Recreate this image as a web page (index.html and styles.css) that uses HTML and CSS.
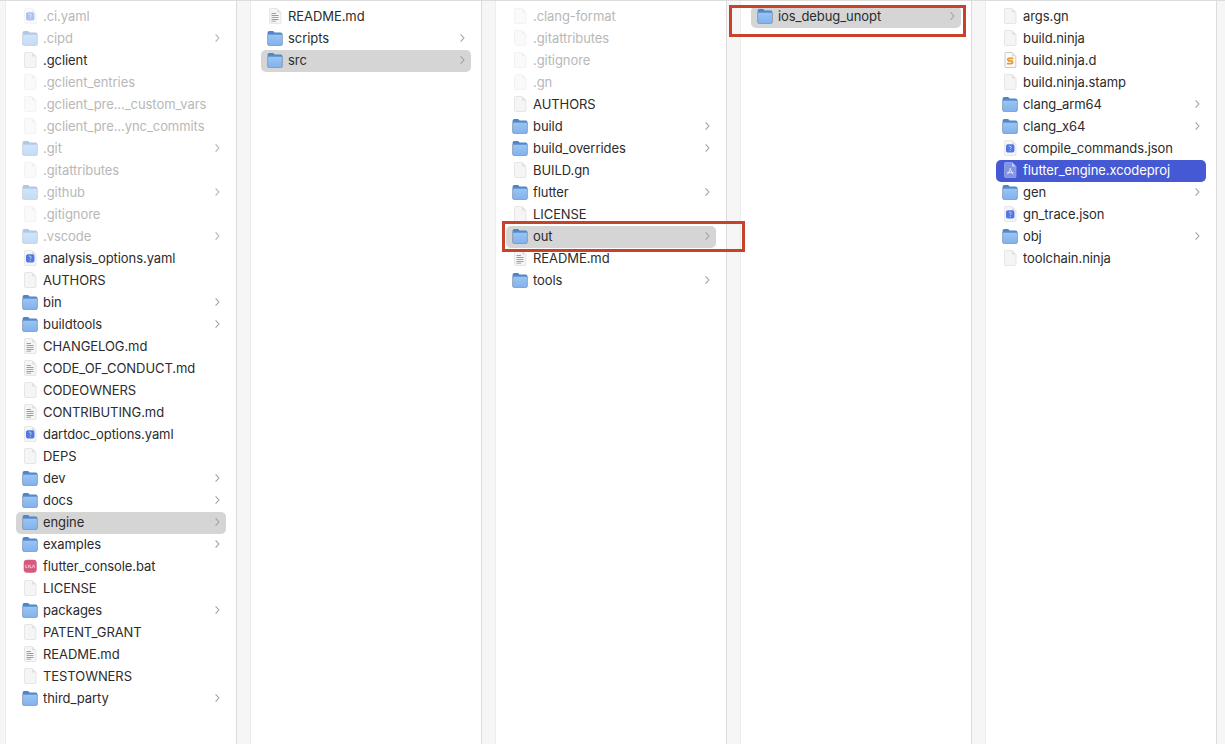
FILE: index.html
```html
<!DOCTYPE html>
<html lang="en">
<head>
<meta charset="utf-8">
<title>Finder</title>
<link rel="stylesheet" href="styles.css">
</head>
<body>
<svg class="defs" width="0" height="0" aria-hidden="true">
  <defs>
    <linearGradient id="fb" x1="0" y1="0" x2="0" y2="1"><stop offset="0" stop-color="#9cc6f4"/><stop offset="1" stop-color="#80b2ec"/></linearGradient>
    <symbol id="chev" viewBox="0 0 6 10">
      <path d="M1.6 1.4L4.9 5L1.6 8.6" fill="none" stroke="#a2a2a2" stroke-width="1.1"/>
    </symbol>
    <symbol id="folder" viewBox="0 0 16 16">
      <path d="M0.6 3C0.6 1.8 1.3 1.1 2.5 1.1H5.6C6.3 1.1 6.7 1.4 7.1 1.9L7.6 2.6H13.6C14.8 2.6 15.4 3.3 15.4 4.4V6H0.6Z" fill="#4d84c6"/>
      <rect x="0.6" y="3.9" width="14.8" height="11.6" rx="1.6" fill="url(#fb)" stroke="#7d8ea3" stroke-width="0.7"/>
      <path d="M1 4.4H15" stroke="#5f95d4" stroke-width="0.9"/>
    </symbol>
    <symbol id="doc" viewBox="0 0 16 16">
      <path d="M2.5 1.5C2.5 0.9 2.9 0.5 3.5 0.5H10L14 4.5V14.5C14 15.1 13.6 15.5 13 15.5H3.5C2.9 15.5 2.5 15.1 2.5 14.5Z" fill="#f5f5f5" stroke="#dcdcdc" stroke-width="0.7"/>
      <path d="M10 0.5V3.5C10 4.1 10.4 4.5 11 4.5H14Z" fill="#e0e0e0"/>
    </symbol>
    <symbol id="text" viewBox="0 0 16 16">
      <use href="#doc"/>
      <path d="M4.5 5.5H9" stroke="#a09ab8" stroke-width="1"/>
      <path d="M4.5 7.5H11.5" stroke="#8f9bb5" stroke-width="1"/>
      <path d="M4.5 9.5H11.5" stroke="#b79aa6" stroke-width="1"/>
      <path d="M4.5 11.5H11.5" stroke="#93a0b0" stroke-width="1"/>
      <path d="M4.5 13.2H9" stroke="#a8a8ac" stroke-width="1"/>
    </symbol>
    <symbol id="yaml" viewBox="0 0 16 16">
      <path d="M2.5 1.5C2.5 0.9 2.9 0.5 3.5 0.5H10L14 4.5V14.5C14 15.1 13.6 15.5 13 15.5H3.5C2.9 15.5 2.5 15.1 2.5 14.5Z" fill="#f5f5f5" stroke="#dedede" stroke-width="0.7"/>
      <path d="M10 0.5V3.5C10 4.1 10.4 4.5 11 4.5H14Z" fill="#e0e0e0"/>
      <rect x="4" y="4.2" width="8.4" height="8.4" rx="1.8" fill="#5078e4"/>
      <path d="M6.8 6.6C7 5.9 9.4 5.9 9.4 7.3C9.4 8.2 8.2 8.1 8.2 9.2M8.2 10.1V10.9" stroke="#cddafc" stroke-width="0.9" fill="none"/>
    </symbol>
    <symbol id="bat" viewBox="0 0 16 16">
      <rect x="1.7" y="1.7" width="13" height="13" rx="3.4" fill="#d65a80"/>
      <path d="M3.8 6.8V9.7H5.4M6.6 6.8V9.7M8 6.8V9.7H9.6M10.4 9.7L11.5 6.8L12.6 9.7" stroke="#fae2e9" stroke-width="0.8" fill="none"/>
    </symbol>
    <symbol id="src" viewBox="0 0 16 16">
      <path d="M3 1.2C3 0.8 3.3 0.5 3.7 0.5H10L13.8 4.3V15C13.8 15.3 13.5 15.5 13.2 15.5H3.7C3.3 15.5 3 15.2 3 14.8Z" fill="#fbfbfb" stroke="#a8a8a8" stroke-width="0.6"/>
      <path d="M10 0.5V4.3H13.8Z" fill="#dcdcdc"/>
      <path d="M11.4 6.4H7C5.4 6.4 5.4 8.8 7 8.8H9.4C11 8.8 11 11.6 9.4 11.6H5" stroke="#e59a2e" stroke-width="1.8" fill="none"/>
    </symbol>
    <symbol id="xcode" viewBox="0 0 16 16">
      <path d="M2.5 1.5C2.5 0.9 2.9 0.5 3.5 0.5H10L14 4.5V14.5C14 15.1 13.6 15.5 13 15.5H3.5C2.9 15.5 2.5 15.1 2.5 14.5Z" fill="#8095e6" stroke="#a9b6ee" stroke-width="0.6"/>
      <path d="M10 0.5V4.5H14Z" fill="#c2cdf5"/>
      <path d="M5.6 12.4L8.8 6.4M11 12.4L7.8 6.4M5 10.6H11.6" stroke="#dfe6fc" stroke-width="0.9" fill="none"/>
    </symbol>
  </defs>
</svg>

<main class="browser">
  <section class="column">
    <div class="row dim"><svg class="icon"><use href="#yaml"/></svg><span class="name">.ci.yaml</span></div>
    <div class="row dim"><svg class="icon"><use href="#folder"/></svg><span class="name">.cipd</span><svg class="chev"><use href="#chev"/></svg></div>
    <div class="row"><svg class="icon"><use href="#doc"/></svg><span class="name">.gclient</span></div>
    <div class="row dim"><svg class="icon"><use href="#doc"/></svg><span class="name">.gclient_entries</span></div>
    <div class="row dim"><svg class="icon"><use href="#doc"/></svg><span class="name">.gclient_pre..._custom_vars</span></div>
    <div class="row dim"><svg class="icon"><use href="#doc"/></svg><span class="name">.gclient_pre...ync_commits</span></div>
    <div class="row dim"><svg class="icon"><use href="#folder"/></svg><span class="name">.git</span><svg class="chev"><use href="#chev"/></svg></div>
    <div class="row dim"><svg class="icon"><use href="#doc"/></svg><span class="name">.gitattributes</span></div>
    <div class="row dim"><svg class="icon"><use href="#folder"/></svg><span class="name">.github</span><svg class="chev"><use href="#chev"/></svg></div>
    <div class="row dim"><svg class="icon"><use href="#doc"/></svg><span class="name">.gitignore</span></div>
    <div class="row dim"><svg class="icon"><use href="#folder"/></svg><span class="name">.vscode</span><svg class="chev"><use href="#chev"/></svg></div>
    <div class="row"><svg class="icon"><use href="#yaml"/></svg><span class="name">analysis_options.yaml</span></div>
    <div class="row"><svg class="icon"><use href="#doc"/></svg><span class="name">AUTHORS</span></div>
    <div class="row"><svg class="icon"><use href="#folder"/></svg><span class="name">bin</span><svg class="chev"><use href="#chev"/></svg></div>
    <div class="row"><svg class="icon"><use href="#folder"/></svg><span class="name">buildtools</span><svg class="chev"><use href="#chev"/></svg></div>
    <div class="row"><svg class="icon"><use href="#text"/></svg><span class="name">CHANGELOG.md</span></div>
    <div class="row"><svg class="icon"><use href="#text"/></svg><span class="name">CODE_OF_CONDUCT.md</span></div>
    <div class="row"><svg class="icon"><use href="#doc"/></svg><span class="name">CODEOWNERS</span></div>
    <div class="row"><svg class="icon"><use href="#text"/></svg><span class="name">CONTRIBUTING.md</span></div>
    <div class="row"><svg class="icon"><use href="#yaml"/></svg><span class="name">dartdoc_options.yaml</span></div>
    <div class="row"><svg class="icon"><use href="#doc"/></svg><span class="name">DEPS</span></div>
    <div class="row"><svg class="icon"><use href="#folder"/></svg><span class="name">dev</span><svg class="chev"><use href="#chev"/></svg></div>
    <div class="row"><svg class="icon"><use href="#folder"/></svg><span class="name">docs</span><svg class="chev"><use href="#chev"/></svg></div>
    <div class="row open"><svg class="icon"><use href="#folder"/></svg><span class="name">engine</span><svg class="chev"><use href="#chev"/></svg></div>
    <div class="row"><svg class="icon"><use href="#folder"/></svg><span class="name">examples</span><svg class="chev"><use href="#chev"/></svg></div>
    <div class="row"><svg class="icon"><use href="#bat"/></svg><span class="name">flutter_console.bat</span></div>
    <div class="row"><svg class="icon"><use href="#doc"/></svg><span class="name">LICENSE</span></div>
    <div class="row"><svg class="icon"><use href="#folder"/></svg><span class="name">packages</span><svg class="chev"><use href="#chev"/></svg></div>
    <div class="row"><svg class="icon"><use href="#doc"/></svg><span class="name">PATENT_GRANT</span></div>
    <div class="row"><svg class="icon"><use href="#text"/></svg><span class="name">README.md</span></div>
    <div class="row"><svg class="icon"><use href="#doc"/></svg><span class="name">TESTOWNERS</span></div>
    <div class="row"><svg class="icon"><use href="#folder"/></svg><span class="name">third_party</span><svg class="chev"><use href="#chev"/></svg></div>
  </section>

  <section class="column">
    <div class="row"><svg class="icon"><use href="#text"/></svg><span class="name">README.md</span></div>
    <div class="row"><svg class="icon"><use href="#folder"/></svg><span class="name">scripts</span><svg class="chev"><use href="#chev"/></svg></div>
    <div class="row open"><svg class="icon"><use href="#folder"/></svg><span class="name">src</span><svg class="chev"><use href="#chev"/></svg></div>
  </section>

  <section class="column">
    <div class="row dim"><svg class="icon"><use href="#doc"/></svg><span class="name">.clang-format</span></div>
    <div class="row dim"><svg class="icon"><use href="#doc"/></svg><span class="name">.gitattributes</span></div>
    <div class="row dim"><svg class="icon"><use href="#doc"/></svg><span class="name">.gitignore</span></div>
    <div class="row dim"><svg class="icon"><use href="#doc"/></svg><span class="name">.gn</span></div>
    <div class="row"><svg class="icon"><use href="#doc"/></svg><span class="name">AUTHORS</span></div>
    <div class="row"><svg class="icon"><use href="#folder"/></svg><span class="name">build</span><svg class="chev"><use href="#chev"/></svg></div>
    <div class="row"><svg class="icon"><use href="#folder"/></svg><span class="name">build_overrides</span><svg class="chev"><use href="#chev"/></svg></div>
    <div class="row"><svg class="icon"><use href="#doc"/></svg><span class="name">BUILD.gn</span></div>
    <div class="row"><svg class="icon"><use href="#folder"/></svg><span class="name">flutter</span><svg class="chev"><use href="#chev"/></svg></div>
    <div class="row"><svg class="icon"><use href="#doc"/></svg><span class="name">LICENSE</span></div>
    <div class="row open"><svg class="icon"><use href="#folder"/></svg><span class="name">out</span><svg class="chev"><use href="#chev"/></svg></div>
    <div class="row"><svg class="icon"><use href="#text"/></svg><span class="name">README.md</span></div>
    <div class="row"><svg class="icon"><use href="#folder"/></svg><span class="name">tools</span><svg class="chev"><use href="#chev"/></svg></div>
  </section>

  <section class="column">
    <div class="row open"><svg class="icon"><use href="#folder"/></svg><span class="name">ios_debug_unopt</span><svg class="chev"><use href="#chev"/></svg></div>
  </section>

  <section class="column">
    <div class="row"><svg class="icon"><use href="#doc"/></svg><span class="name">args.gn</span></div>
    <div class="row"><svg class="icon"><use href="#doc"/></svg><span class="name">build.ninja</span></div>
    <div class="row"><svg class="icon"><use href="#src"/></svg><span class="name">build.ninja.d</span></div>
    <div class="row"><svg class="icon"><use href="#doc"/></svg><span class="name">build.ninja.stamp</span></div>
    <div class="row"><svg class="icon"><use href="#folder"/></svg><span class="name">clang_arm64</span><svg class="chev"><use href="#chev"/></svg></div>
    <div class="row"><svg class="icon"><use href="#folder"/></svg><span class="name">clang_x64</span><svg class="chev"><use href="#chev"/></svg></div>
    <div class="row"><svg class="icon"><use href="#yaml"/></svg><span class="name">compile_commands.json</span></div>
    <div class="row selected"><svg class="icon"><use href="#xcode"/></svg><span class="name">flutter_engine.xcodeproj</span></div>
    <div class="row"><svg class="icon"><use href="#folder"/></svg><span class="name">gen</span><svg class="chev"><use href="#chev"/></svg></div>
    <div class="row"><svg class="icon"><use href="#yaml"/></svg><span class="name">gn_trace.json</span></div>
    <div class="row"><svg class="icon"><use href="#folder"/></svg><span class="name">obj</span><svg class="chev"><use href="#chev"/></svg></div>
    <div class="row"><svg class="icon"><use href="#doc"/></svg><span class="name">toolchain.ninja</span></div>
  </section>

  <div class="callout callout-out"></div>
  <div class="callout callout-ios"></div>
</main>
</body>
</html>
```
FILE: styles.css
```css
* { box-sizing: border-box; }
html, body { margin: 0; height: 100%; overflow: hidden; }
body {
  background: #f6f6f6;
  font-family: "Inter", "Liberation Sans", sans-serif;
  font-size: 13px;
  letter-spacing: -0.07px;
  color: #2c2c2c;
}
.defs { position: absolute; }
.browser {
  position: relative;
  display: flex;
  gap: 13px;
  height: 744px;
  padding-left: 5px;
  border-top: 1px solid #dcdcdc;
}
.column {
  flex: none;
  width: 232px;
  padding: 5px 10px 0;
  background: #fff;
  border-right: 1px solid #dcdcdc;
  border-left: 1px solid #ececec;
}
.row {
  display: flex;
  align-items: center;
  height: 22px;
  padding: 0 6px 2px;
  border-radius: 5px;
}
.icon { flex: none; width: 16px; height: 16px; margin-right: 5px; }
.name { flex: 1; white-space: nowrap; overflow: hidden; }
.chev { flex: none; width: 6px; height: 10px; }
.dim .name { color: #b8b8b8; }
.dim .icon { opacity: 0.45; }
.dim .chev { opacity: 0.8; }
.open { background: #d5d5d5; }
.selected { background: #4659d4; color: #fff; }
.callout {
  position: absolute;
  border: 3px solid #c6422b;
  pointer-events: none;
}
.callout-out { left: 502px; top: 220px; width: 243px; height: 31px; }
.callout-ios { left: 729px; top: 4px; width: 237px; height: 32px; }
```
